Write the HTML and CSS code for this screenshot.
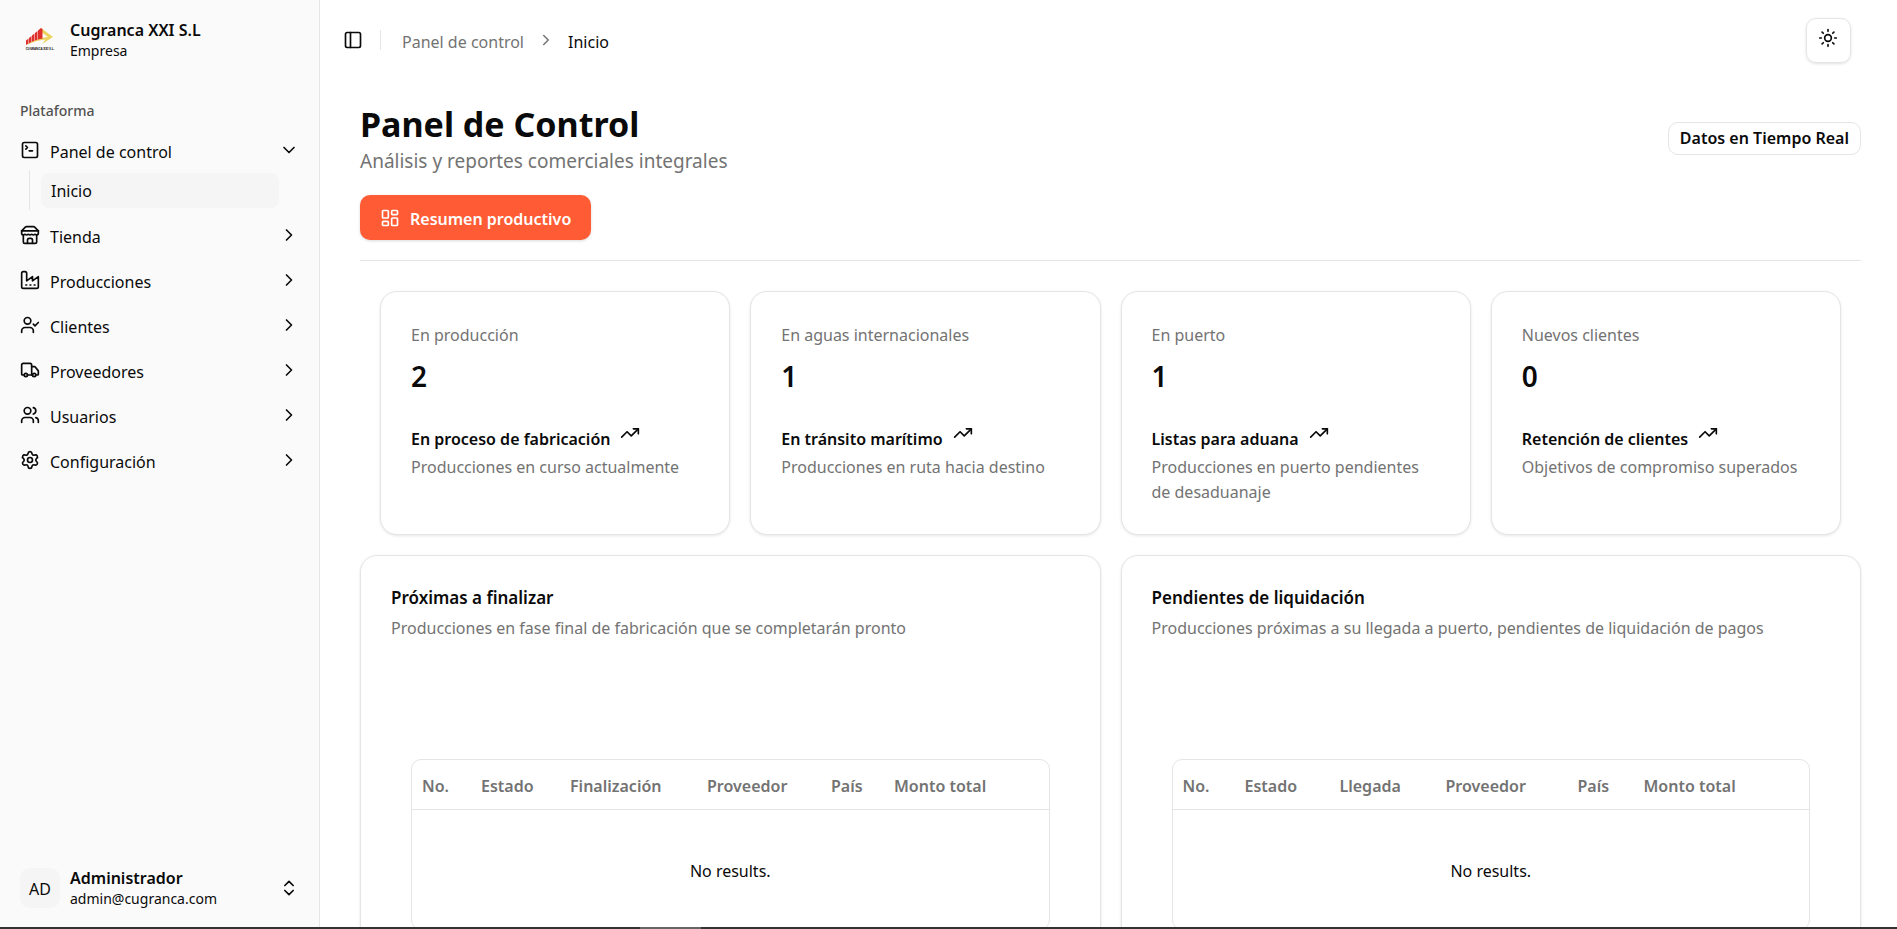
FILE: index.html
```html
<!DOCTYPE html>
<html lang="es">
<head>
  <meta charset="UTF-8">
  <meta name="viewport" content="width=device-width, initial-scale=1.0">
  <title>Panel de Control</title>
  <link rel="stylesheet" href="styles.css">
</head>
<body>
  <!-- Iconos compartidos -->
  <svg class="sprite" aria-hidden="true">
    <symbol id="chevron-right" viewBox="0 0 24 24"><path d="m9 18 6-6-6-6"/></symbol>
    <symbol id="chevron-down" viewBox="0 0 24 24"><path d="m6 9 6 6 6-6"/></symbol>
    <symbol id="trending-up" viewBox="0 0 24 24"><path d="M16 7h6v6"/><path d="m22 7-8.5 8.5-5-5L2 17"/></symbol>
  </svg>

  <div class="layout">
    <aside class="sidebar">
      <a class="brand" href="#">
        <svg class="brand-logo" viewBox="0 0 40 40" aria-hidden="true">
          <path fill="#ecd35c" d="M21 8l12 9-11 7 3.500-4.500C19 20 12 22 7 25c4-4 12-7 21-8l-6-4.500z"/>
          <path fill="#e0302c" d="M6 20.500l2.500-2v5L6 25zM9 18l2.500-2v6L9 23.300zM12 15.500l2.500-2v7.300L12 21.800zM15 13l2.500-2v8.800l-2.500.8zM18 10.500L21 8l1.500 1v9.500l-4.500 1z"/>
          <text x="20" y="30" text-anchor="middle" class="brand-logo-text">CUGRANCA XXI S.L.</text>
        </svg>
        <span class="two-lines">
          <strong>Cugranca XXI S.L</strong>
          <small>Empresa</small>
        </span>
      </a>

      <nav class="nav">
        <h2 class="nav-title">Plataforma</h2>
        <button class="nav-item" type="button" aria-expanded="true">
          <svg class="icon" viewBox="0 0 24 24"><path d="m7 11 2-2-2-2"/><path d="M11 13h4"/><rect x="3" y="3" width="18" height="18" rx="2"/></svg>
          <span class="label">Panel de control</span>
          <svg class="icon"><use href="#chevron-down"/></svg>
        </button>
        <ul class="subnav">
          <li><a class="active" href="#">Inicio</a></li>
        </ul>
        <button class="nav-item" type="button">
          <svg class="icon" viewBox="0 0 24 24"><path d="m2 7 4.41-4.41A2 2 0 0 1 7.83 2h8.34a2 2 0 0 1 1.42.59L22 7"/><path d="M4 12v8a2 2 0 0 0 2 2h12a2 2 0 0 0 2-2v-8"/><path d="M15 22v-4a2 2 0 0 0-2-2h-2a2 2 0 0 0-2 2v4"/><path d="M2 7h20"/><path d="M22 7v3a2 2 0 0 1-2 2a2.7 2.7 0 0 1-1.59-.63.7.7 0 0 0-.82 0A2.7 2.7 0 0 1 16 12a2.7 2.7 0 0 1-1.59-.63.7.7 0 0 0-.82 0A2.7 2.7 0 0 1 12 12a2.7 2.7 0 0 1-1.59-.63.7.7 0 0 0-.82 0A2.7 2.7 0 0 1 8 12a2.7 2.7 0 0 1-1.59-.63.7.7 0 0 0-.82 0A2.7 2.7 0 0 1 4 12a2 2 0 0 1-2-2V7"/></svg>
          <span class="label">Tienda</span>
          <svg class="icon"><use href="#chevron-right"/></svg>
        </button>
        <button class="nav-item" type="button">
          <svg class="icon" viewBox="0 0 24 24"><path d="M2 20a2 2 0 0 0 2 2h16a2 2 0 0 0 2-2V8l-7 5V8l-7 5V4a2 2 0 0 0-2-2H4a2 2 0 0 0-2 2Z"/><path d="M17 18h1"/><path d="M12 18h1"/><path d="M7 18h1"/></svg>
          <span class="label">Producciones</span>
          <svg class="icon"><use href="#chevron-right"/></svg>
        </button>
        <button class="nav-item" type="button">
          <svg class="icon" viewBox="0 0 24 24"><path d="m16 11 2 2 4-4"/><path d="M16 21v-2a4 4 0 0 0-4-4H6a4 4 0 0 0-4 4v2"/><circle cx="9" cy="7" r="4"/></svg>
          <span class="label">Clientes</span>
          <svg class="icon"><use href="#chevron-right"/></svg>
        </button>
        <button class="nav-item" type="button">
          <svg class="icon" viewBox="0 0 24 24"><path d="M14 18V6a2 2 0 0 0-2-2H4a2 2 0 0 0-2 2v11a1 1 0 0 0 1 1h2"/><path d="M15 18H9"/><path d="M19 18h2a1 1 0 0 0 1-1v-3.65a1 1 0 0 0-.22-.624l-3.48-4.35A1 1 0 0 0 17.52 8H14"/><circle cx="17" cy="18" r="2"/><circle cx="7" cy="18" r="2"/></svg>
          <span class="label">Proveedores</span>
          <svg class="icon"><use href="#chevron-right"/></svg>
        </button>
        <button class="nav-item" type="button">
          <svg class="icon" viewBox="0 0 24 24"><path d="M16 21v-2a4 4 0 0 0-4-4H6a4 4 0 0 0-4 4v2"/><path d="M16 3.128a4 4 0 0 1 0 7.744"/><path d="M22 21v-2a4 4 0 0 0-3-3.87"/><circle cx="9" cy="7" r="4"/></svg>
          <span class="label">Usuarios</span>
          <svg class="icon"><use href="#chevron-right"/></svg>
        </button>
        <button class="nav-item" type="button">
          <svg class="icon" viewBox="0 0 24 24"><path d="M9.671 4.136a2.34 2.34 0 0 1 4.659 0 2.34 2.34 0 0 0 3.319 1.915 2.34 2.34 0 0 1 2.33 4.033 2.34 2.34 0 0 0 0 3.831 2.34 2.34 0 0 1-2.33 4.033 2.34 2.34 0 0 0-3.319 1.915 2.34 2.34 0 0 1-4.659 0 2.34 2.34 0 0 0-3.32-1.915 2.34 2.34 0 0 1-2.33-4.033 2.34 2.34 0 0 0 0-3.831A2.34 2.34 0 0 1 6.35 6.051a2.34 2.34 0 0 0 3.319-1.915"/><circle cx="12" cy="12" r="3"/></svg>
          <span class="label">Configuración</span>
          <svg class="icon"><use href="#chevron-right"/></svg>
        </button>
      </nav>

      <button class="user" type="button">
        <span class="avatar">AD</span>
        <span class="two-lines">
          <strong>Administrador</strong>
          <small>admin@cugranca.com</small>
        </span>
        <svg class="icon" viewBox="0 0 24 24"><path d="m7 15 5 5 5-5"/><path d="m7 9 5-5 5 5"/></svg>
      </button>
    </aside>

    <main class="main">
      <header class="topbar">
        <button class="toggle" type="button" aria-label="Alternar barra lateral">
          <svg class="icon" viewBox="0 0 24 24"><rect x="3" y="3" width="18" height="18" rx="2"/><path d="M9 3v18"/></svg>
        </button>
        <span class="separator"></span>
        <nav class="breadcrumb">
          <a class="label" href="#">Panel de control</a>
          <svg class="icon icon-small"><use href="#chevron-right"/></svg>
          <span class="label">Inicio</span>
        </nav>
        <button class="theme" type="button" aria-label="Cambiar tema">
          <svg class="icon" viewBox="0 0 24 24"><circle cx="12" cy="12" r="4"/><path d="M12 2v2"/><path d="M12 20v2"/><path d="m4.930 4.930 1.410 1.410"/><path d="m17.660 17.660 1.410 1.410"/><path d="M2 12h2"/><path d="M20 12h2"/><path d="m6.340 17.660-1.410 1.410"/><path d="m19.070 4.930-1.410 1.410"/></svg>
        </button>
      </header>

      <div class="content">
        <div class="page-head">
          <div>
            <h1>Panel de Control</h1>
            <p class="subtitle">Análisis y reportes comerciales integrales</p>
          </div>
          <span class="badge">Datos en Tiempo Real</span>
        </div>

        <div class="tabs">
          <button class="tab" type="button">
            <svg class="icon" viewBox="0 0 24 24"><rect x="3" y="3" width="7" height="9" rx="1"/><rect x="14" y="3" width="7" height="5" rx="1"/><rect x="14" y="12" width="7" height="9" rx="1"/><rect x="3" y="16" width="7" height="5" rx="1"/></svg>
            <span class="label">Resumen productivo</span>
          </button>
        </div>

        <section class="stats">
          <article class="card">
            <p class="muted">En producción</p>
            <p class="number">2</p>
            <h3 class="trend"><span class="label">En proceso de fabricación</span> <svg class="icon"><use href="#trending-up"/></svg></h3>
            <p class="muted">Producciones en curso actualmente</p>
          </article>
          <article class="card">
            <p class="muted">En aguas internacionales</p>
            <p class="number">1</p>
            <h3 class="trend"><span class="label">En tránsito marítimo</span> <svg class="icon"><use href="#trending-up"/></svg></h3>
            <p class="muted">Producciones en ruta hacia destino</p>
          </article>
          <article class="card">
            <p class="muted">En puerto</p>
            <p class="number">1</p>
            <h3 class="trend"><span class="label">Listas para aduana</span> <svg class="icon"><use href="#trending-up"/></svg></h3>
            <p class="muted">Producciones en puerto pendientes de desaduanaje</p>
          </article>
          <article class="card">
            <p class="muted">Nuevos clientes</p>
            <p class="number">0</p>
            <h3 class="trend"><span class="label">Retención de clientes</span> <svg class="icon"><use href="#trending-up"/></svg></h3>
            <p class="muted">Objetivos de compromiso superados</p>
          </article>
        </section>

        <section class="panels">
          <article class="card">
            <h2 class="panel-title">Próximas a finalizar</h2>
            <p class="muted">Producciones en fase final de fabricación que se completarán pronto</p>
            <div class="table-box">
              <table class="table-finish">
                <thead>
                  <tr>
                    <th>No.</th>
                    <th>Estado</th>
                    <th>Finalización</th>
                    <th>Proveedor</th>
                    <th>País</th>
                    <th>Monto total</th>
                  </tr>
                </thead>
                <tbody>
                  <tr>
                    <td colspan="6">No results.</td>
                  </tr>
                </tbody>
              </table>
            </div>
          </article>
          <article class="card">
            <h2 class="panel-title">Pendientes de liquidación</h2>
            <p class="muted">Producciones próximas a su llegada a puerto, pendientes de liquidación de pagos</p>
            <div class="table-box">
              <table class="table-arrival">
                <thead>
                  <tr>
                    <th>No.</th>
                    <th>Estado</th>
                    <th>Llegada</th>
                    <th>Proveedor</th>
                    <th>País</th>
                    <th>Monto total</th>
                  </tr>
                </thead>
                <tbody>
                  <tr>
                    <td colspan="6">No results.</td>
                  </tr>
                </tbody>
              </table>
            </div>
          </article>
        </section>
      </div>
    </main>
  </div>

  <div class="bottom-edge"><span></span></div>
</body>
</html>
```
FILE: styles.css
```css
* {
  box-sizing: border-box;
}
body {
  margin: 0;
  font-family: "Noto Sans", "Open Sans", sans-serif;
  font-size: 16px;
  line-height: 25px;
  color: #0a0a0a;
  background: #fff;
}
h1, h2, h3, p, ul {
  margin: 0;
  padding: 0;
}
ul {
  list-style: none;
}
a {
  color: inherit;
  text-decoration: none;
}
button {
  font: inherit;
  color: inherit;
  background: none;
  border: 0;
  padding: 0;
  text-align: left;
  cursor: pointer;
}
.sprite {
  display: none;
}
.icon {
  width: 20px;
  height: 20px;
  flex-shrink: 0;
  fill: none;
  stroke: currentColor;
  stroke-width: 2;
  stroke-linecap: round;
  stroke-linejoin: round;
}
.icon-small {
  width: 18px;
  height: 18px;
}
.label {
  padding-top: 4px;
}
.muted {
  color: #737373;
}
.layout {
  display: flex;
  height: 100vh;
  overflow: hidden;
}

/* Barra lateral */
.sidebar {
  width: 320px;
  flex-shrink: 0;
  display: flex;
  flex-direction: column;
  padding: 10px;
  background: #fafafa;
  border-right: 1px solid #e5e5e5;
}
.brand,
.user {
  display: flex;
  align-items: center;
  gap: 10px;
  height: 60px;
  padding: 0 10px;
}
.user {
  height: 62px;
}
.brand-logo {
  width: 40px;
  height: 40px;
}
.brand-logo-text {
  font-size: 3px;
  font-weight: 700;
  fill: #111;
}
.two-lines {
  flex: 1;
  display: flex;
  flex-direction: column;
}
.two-lines strong {
  font-weight: 600;
  line-height: 22px;
}
.two-lines small {
  font-size: 14px;
  line-height: 20px;
}
.nav {
  flex: 1;
  display: flex;
  flex-direction: column;
  padding-top: 20px;
}
.nav-title {
  height: 40px;
  padding: 0 10px;
  font-size: 14px;
  font-weight: 500;
  line-height: 42px;
  color: #525252;
}
.nav-item {
  display: flex;
  align-items: center;
  gap: 10px;
  height: 40px;
  padding: 0 10px;
  margin-bottom: 5px;
  border-radius: 8px;
}
.nav-item .label {
  flex: 1;
}
.nav-item[aria-expanded] {
  margin-bottom: 0;
}
.subnav {
  margin: 0 30px 5px 19px;
  padding: 3px 0 2px 11px;
  border-left: 1px solid #e5e5e5;
}
.subnav a {
  display: block;
  height: 35px;
  padding: 6px 10px;
  border-radius: 8px;
}
.subnav .active {
  background: #f5f5f5;
}
.avatar {
  width: 40px;
  height: 40px;
  border-radius: 10px;
  background: #f5f5f5;
  line-height: 43px;
  text-align: center;
}

/* Cabecera */
.main {
  flex: 1;
  min-width: 0;
}
.topbar {
  display: flex;
  align-items: center;
  height: 80px;
  padding: 0 46px 0 15px;
}
.toggle {
  display: flex;
  padding: 8px;
}
.separator {
  width: 1px;
  height: 20px;
  margin: 0 21px 0 9px;
  background: #e5e5e5;
}
.breadcrumb {
  flex: 1;
  display: flex;
  align-items: center;
  gap: 13px;
}
.breadcrumb a,
.breadcrumb .icon {
  color: #737373;
}
.theme {
  display: flex;
  justify-content: center;
  width: 45px;
  height: 45px;
  padding: 9px 2px 0 0;
  border: 1px solid #e5e5e5;
  border-radius: 10px;
  box-shadow: 0 1px 3px rgba(0, 0, 0, 0.12);
}

/* Contenido */
.content {
  padding: 22px 36px 40px 40px;
}
.page-head {
  display: flex;
  align-items: center;
  justify-content: space-between;
}
h1 {
  font-size: 34px;
  font-weight: 700;
  line-height: 45px;
}
.subtitle {
  font-size: 19px;
  line-height: 28px;
  color: #737373;
}
.badge {
  padding: 3px 11px;
  border: 1px solid #e5e5e5;
  border-radius: 10px;
  font-weight: 600;
}
.tabs {
  padding: 20px 0;
  border-bottom: 1px solid #e5e5e5;
}
.tab {
  display: flex;
  align-items: center;
  gap: 10px;
  height: 45px;
  padding: 0 20px;
  border-radius: 10px;
  background: #ff5c35;
  color: #fff;
  font-weight: 600;
  box-shadow: 0 1px 3px rgba(0, 0, 0, 0.15);
}
.card {
  padding: 30px;
  border: 1px solid #e5e5e5;
  border-radius: 17px;
  background: #fff;
  box-shadow: 0 1px 3px rgba(0, 0, 0, 0.1);
}
.stats {
  display: grid;
  grid-template-columns: repeat(4, 1fr);
  gap: 20px;
  padding: 30px 20px 20px;
}
.stats .card {
  padding: 31px 30px 29px;
}
.number {
  margin: 10px 0 29px;
  font-size: 28px;
  font-weight: 600;
  line-height: 36px;
}
.trend {
  display: flex;
  gap: 10px;
  margin-bottom: 3px;
  font-size: 16px;
  font-weight: 600;
}
.panels {
  display: grid;
  grid-template-columns: repeat(2, 1fr);
  gap: 20px;
}
.panel-title {
  margin-bottom: 6px;
  font-size: 17px;
  font-weight: 600;
  line-height: 24px;
}
.table-box {
  margin: 118px 20px 20px;
  border: 1px solid #e5e5e5;
  border-radius: 10px;
  overflow: hidden;
}
table {
  width: 100%;
  table-layout: fixed;
  border-collapse: collapse;
}
th {
  height: 49px;
  padding: 4px 10px 0;
  border-bottom: 1px solid #e5e5e5;
  font-weight: 600;
  text-align: left;
  white-space: nowrap;
  color: #737373;
}
td {
  height: 120px;
  padding: 4px 10px 0;
  text-align: center;
}
.table-finish th:nth-child(1) { width: 59px; }
.table-finish th:nth-child(2) { width: 89px; }
.table-finish th:nth-child(3) { width: 137px; }
.table-finish th:nth-child(4) { width: 124px; }
.table-finish th:nth-child(5) { width: 63px; }
.table-arrival th:nth-child(1) { width: 62px; }
.table-arrival th:nth-child(2) { width: 95px; }
.table-arrival th:nth-child(3) { width: 106px; }
.table-arrival th:nth-child(4) { width: 132px; }
.table-arrival th:nth-child(5) { width: 66px; }

/* Borde inferior de la ventana */
.bottom-edge {
  position: fixed;
  left: 0;
  right: 0;
  bottom: 0;
  height: 2px;
  padding-left: 640px;
  background: #333;
}
.bottom-edge span {
  display: block;
  width: 61px;
  height: 2px;
  background: #666;
}
```
